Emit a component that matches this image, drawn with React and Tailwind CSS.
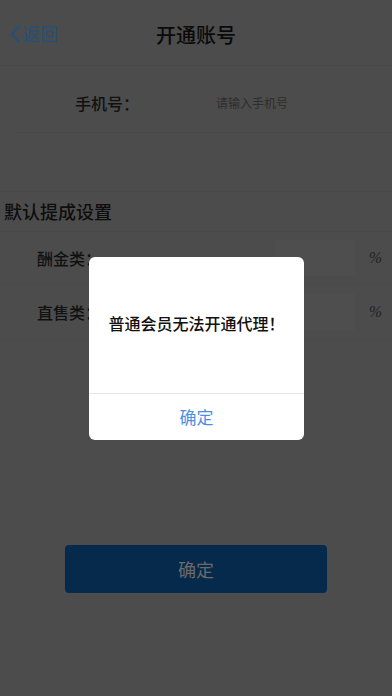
import React from "react";

export default function App() {
  const font = { fontFamily: '"Noto Sans CJK SC", "Noto Sans", sans-serif' };
  const pct = { fontFamily: '"Liberation Serif", serif', fontStyle: "italic" };
  return (
    <div className="relative w-[392px] h-[696px] bg-[#4c4c4c] overflow-hidden" style={font}>
      {/* nav */}
      <div className="relative h-[66px] flex items-center justify-center border-b border-[#484848]">
        <div className="absolute left-[10px] top-[20px] flex items-center text-[#22507f] text-[18px]">
          <svg width="11" height="20" viewBox="0 0 11 20" className="mr-[1px]">
            <path d="M9 2 L2 10 L9 18" fill="none" stroke="#22507f" strokeWidth="2" />
          </svg>
          <span>返回</span>
        </div>
        <span className="text-[20px] font-medium text-[#0a0a0a] mt-[4px]">开通账号</span>
      </div>
      {/* phone row */}
      <div className="h-[67px] ml-[15px] pt-[8px] border-b border-[#484848] flex items-center">
        <span className="ml-[60px] w-[141px] text-[16px] font-medium text-[#111]">手机号：</span>
        <span className="text-[12px] text-[#2e2e2e]">请输入手机号</span>
      </div>
      <div className="h-[59px] border-b border-[#494949]" />
      {/* section header */}
      <div className="h-[40px] flex items-center pl-[4px] border-b border-[#494949]">
        <span className="text-[18px] font-medium text-[#0e0e0e]">默认提成设置</span>
      </div>
      <div className="h-[52px] flex items-center border-b border-[#4a4a4a]">
        <span className="ml-[37px] text-[16px] font-medium text-[#111]">酬金类：</span>
        <div className="ml-auto w-[80px] h-[36px] bg-[#4e4e4e]" />
        <span className="ml-[14px] mr-[10px] text-[16px] text-[#222]" style={pct}>%</span>
      </div>
      <div className="h-[56px] flex items-center border-b border-[#4a4a4a]">
        <span className="ml-[37px] text-[16px] font-medium text-[#111]">直售类：</span>
        <div className="ml-auto w-[80px] h-[36px] bg-[#4e4e4e]" />
        <span className="ml-[14px] mr-[10px] text-[16px] text-[#222]" style={pct}>%</span>
      </div>
      <div className="mt-[205px] mx-[65px] h-[48px] rounded-[4px] bg-[#062a4c] flex items-center justify-center">
        <span className="text-[18px] text-[#6b6b6b]">确定</span>
      </div>

      {/* modal */}
      <div className="absolute left-[89px] top-[257px] w-[215px] h-[183px] bg-white rounded-[6px] flex flex-col">
        <div className="h-[137px] flex items-center justify-center border-b border-[#e6e6e6]">
          <span className="text-[16px] font-medium text-[#111] mb-[5px]">普通会员无法开通代理！</span>
        </div>
        <div className="flex-1 flex items-center justify-center">
          <span className="text-[17px] text-[#4a90e2]">确定</span>
        </div>
      </div>
    </div>
  );
}
